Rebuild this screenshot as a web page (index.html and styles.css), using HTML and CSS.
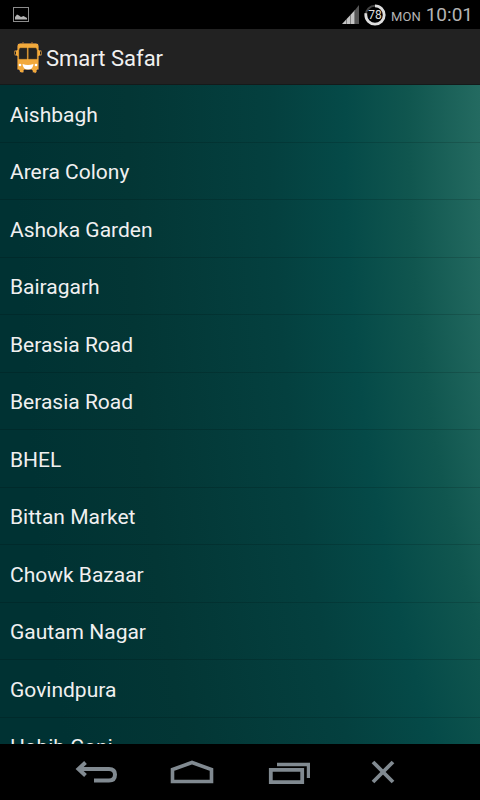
FILE: index.html
```html
<!DOCTYPE html>
<html lang="en">
<head>
    <meta charset="UTF-8">
    <meta name="viewport" content="width=device-width, initial-scale=1.0">
    <title>Smart Safar</title>
    <link rel="stylesheet" href="styles.css">
</head>
<body>
    <div class="status-bar">
        <svg class="picture-icon" width="16" height="16" viewBox="0 0 16 16">
            <rect x="0.5" y="0.5" width="15" height="14" fill="none" stroke="#8c8c8c"/>
            <path d="M2 12.5V10L4 7.5L6 8.5L8 10L10.5 9L14 11V12.5Z" fill="#b4b4b4"/>
        </svg>
        <div class="status-right">
            <svg width="17" height="20" viewBox="0 0 17 20">
                <path d="M0 19L13 5V19Z" fill="#c4c4c4"/>
                <path d="M13 5L17 0V19H13Z" fill="#555"/>
                <path d="M4.5 14V19M8.5 10V19M12.5 5V19" stroke="#555" stroke-width="0.6"/>
            </svg>
            <svg class="battery" width="22" height="22" viewBox="0 0 22 22">
                <circle cx="11" cy="11" r="9.2" fill="none" stroke="#444" stroke-width="2"/>
                <circle cx="11" cy="11" r="9.2" fill="none" stroke="#dedede" stroke-width="2.8" pathLength="100" stroke-dasharray="78 22" transform="rotate(-90 11 11)"/>
                <text x="11" y="15" text-anchor="middle">78</text>
            </svg>
            <span class="day">MON</span>
            <span class="clock">10:01</span>
        </div>
    </div>

    <header class="action-bar">
        <svg width="28" height="32" viewBox="0 0 28 32">
            <path d="M6 1H22Q25 1 25 4V8H27Q28 8 28 10V13Q28 14 26 14H25V28H23V30Q22 32 20 31Q18 31 18 28H10V30Q10 31 8 31Q5 31 5 28H3V14H2Q0 14 0 12V9Q0 8 2 8H3V4Q3 1 6 1Z" fill="#f2a93b" stroke="#111a33" stroke-width="0.8"/>
            <path d="M9 0V2M18 0V2" stroke="#b9772e"/>
            <path d="M6 6H13V17H5V8ZM14.5 6H22L23 8V17H14.5Z" fill="#222" stroke="#6b4a1e" stroke-width="0.5"/>
            <path d="M1.5 9.5V12.5M26.5 9.5V12.5" stroke="#222"/>
            <circle cx="6" cy="23" r="1.3" fill="#fff"/>
            <circle cx="22" cy="23" r="1.3" fill="#fff"/>
            <path d="M8.5 22Q14 24 19.5 22Q19 27.5 14 27.5Q9 27.5 8.5 22Z" fill="#fff"/>
        </svg>
        <h1>Smart Safar</h1>
    </header>

    <main class="area-list">
        <ul>
            <li><a href="#">Aishbagh</a></li>
            <li><a href="#">Arera Colony</a></li>
            <li><a href="#">Ashoka Garden</a></li>
            <li><a href="#">Bairagarh</a></li>
            <li><a href="#">Berasia Road</a></li>
            <li><a href="#">Berasia Road</a></li>
            <li><a href="#">BHEL</a></li>
            <li><a href="#">Bittan Market</a></li>
            <li><a href="#">Chowk Bazaar</a></li>
            <li><a href="#">Gautam Nagar</a></li>
            <li><a href="#">Govindpura</a></li>
            <li><a href="#">Habib Ganj</a></li>
        </ul>
    </main>

    <nav class="nav-bar">
        <button type="button" aria-label="Back">
            <svg width="44" height="24" viewBox="0 0 44 24">
                <path d="M11.5 2.5L4.5 9L11.5 15.5M4.5 9H35Q41 9 41 14.5Q41 20.5 35 20.5H20" fill="none" stroke="#818a91" stroke-width="4"/>
            </svg>
        </button>
        <button type="button" aria-label="Home">
            <svg width="44" height="24" viewBox="0 0 44 24">
                <path d="M2.5 21.5V9.5L22 2.5L41.5 9.5V21.5Z" fill="none" stroke="#818a91" stroke-width="3.6"/>
            </svg>
        </button>
        <button type="button" aria-label="Recent apps">
            <svg width="44" height="24" viewBox="0 0 44 24">
                <path d="M4.8 9.8H36.2V22.2H4.8Z" fill="none" stroke="#818a91" stroke-width="3.8"/>
                <path d="M11 4.5H42.5V18" fill="none" stroke="#818a91" stroke-width="3.4"/>
            </svg>
        </button>
        <button type="button" aria-label="Close">
            <svg width="44" height="24" viewBox="0 0 44 24">
                <path d="M11 2L31 22M31 2L11 22" stroke="#818a91" stroke-width="3.8"/>
            </svg>
        </button>
    </nav>
</body>
</html>
```

FILE: styles.css
```css
body {
    display: flex;
    flex-direction: column;
    height: 100vh;
    margin: 0;
    background-color: #000;
    color: #f0f0f0;
    font-family: Roboto, "Liberation Sans", sans-serif;
}
svg {
    display: block;
}
.status-bar {
    display: flex;
    align-items: center;
    justify-content: space-between;
    height: 29px;
    padding: 0 7px 0 13px;
    color: #b4b4b4;
}
.status-right {
    display: flex;
    align-items: baseline;
    gap: 5px;
}
.status-right svg {
    align-self: center;
}
.battery text {
    fill: #dedede;
    font-size: 12px;
}
.day {
    font-size: 13px;
}
.clock {
    font-size: 19px;
}
.action-bar {
    display: flex;
    align-items: center;
    gap: 4px;
    height: 53px;
    padding: 2px 14px 0;
    border-bottom: 1px solid #141a1a;
    background-color: #222;
}
.action-bar h1 {
    margin: 0;
    padding-top: 2px;
    font-size: 22px;
    font-weight: 400;
}
.area-list {
    flex: 1;
    min-height: 0;
    overflow: hidden;
    background: radial-gradient(167% 280% at 167% 5%, #246b61 40%, #10564f 49%, #054a48 57%, #04403f 66%, #033635 84%, #003233 98%);
}
.area-list ul {
    margin: 0;
    padding: 0;
    list-style: none;
}
.area-list a {
    display: flex;
    align-items: center;
    box-sizing: border-box;
    height: 58px;
    padding: 2px 10px 0;
    border-bottom: 1px solid rgba(0, 0, 0, 0.14);
    color: #f0f0f0;
    font-size: 21px;
    text-decoration: none;
}
.area-list li:nth-child(even) a {
    height: 57px;
}
.nav-bar {
    display: flex;
    height: 56px;
    padding: 0 10%;
}
.nav-bar button {
    display: flex;
    flex: 1;
    align-items: center;
    justify-content: center;
    padding: 0;
    border: none;
    background: none;
    cursor: pointer;
}
```
